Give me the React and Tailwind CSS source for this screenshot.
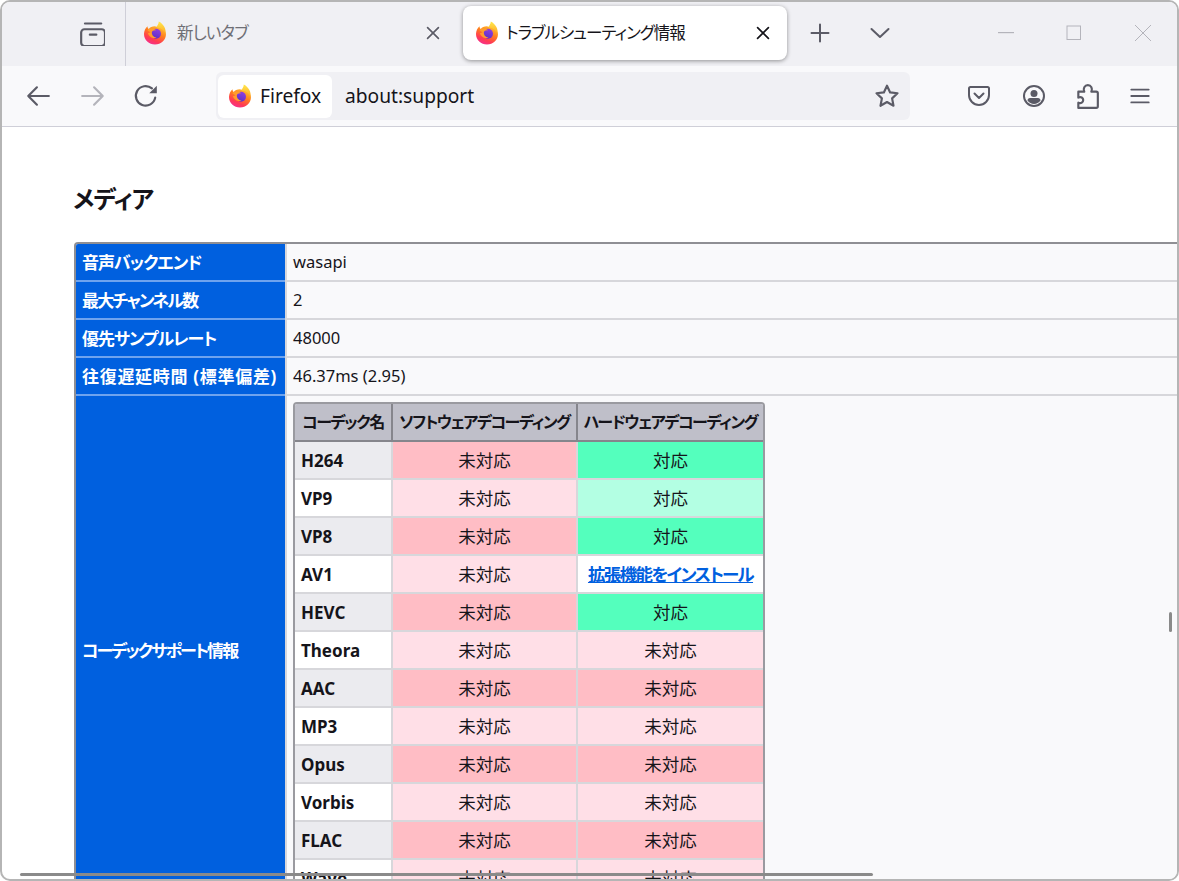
import { useId } from 'react'

const FONT = "font-['Noto_Sans','Noto_Sans_CJK_JP',sans-serif] [font-feature-settings:'palt']"

function FirefoxLogo({ size = 24 }) {
  const id = useId()
  return (
    <svg width={size} height={size} viewBox="0 0 24 24" className="shrink-0" aria-hidden="true">
      <defs>
        <linearGradient id={`${id}b`} x1="0.75" y1="0.05" x2="0.25" y2="0.95">
          <stop offset="0" stopColor="#ffbd2e" />
          <stop offset="0.4" stopColor="#ff7a1f" />
          <stop offset="0.75" stopColor="#ff3a55" />
          <stop offset="1" stopColor="#f5318c" />
        </linearGradient>
        <linearGradient id={`${id}f`} x1="0.5" y1="0" x2="0.5" y2="1">
          <stop offset="0" stopColor="#ffe94d" />
          <stop offset="1" stopColor="#ffa825" />
        </linearGradient>
        <linearGradient id={`${id}c`} x1="0.7" y1="0" x2="0.3" y2="1">
          <stop offset="0" stopColor="#8f3fe0" />
          <stop offset="1" stopColor="#5b2fc4" />
        </linearGradient>
      </defs>
      <path d="M1 13C1 9.600 2.500 7 4.500 5.200 4.600 6.600 5 7.400 5.800 8 7.200 6.200 9.400 5.200 12.500 5.400 17 5.600 23 8.400 23 13 23 19 18 23.500 12 23.500S1 19 1 13Z" fill={`url(#${id}b)`} />
      <path d="M15.800 .5C15.800 3 14 4.400 13.600 6.400 17.500 6.600 21 9 22.400 12.600 23.600 8.800 20.800 3 15.800 .5Z" fill={`url(#${id}f)`} />
      <circle cx="13" cy="12.800" r="5" fill={`url(#${id}c)`} />
      <path d="M4.400 9C6.600 6.900 10.800 7 13.200 9.300 10.800 8.900 9.200 9.800 8.800 11.200 8.600 13.400 10.200 16.200 13.600 16.800 9.600 18 5.400 15.400 5 12 6 12.300 7 11.800 7.600 11 6.400 10.800 5.200 10 4.400 9Z" fill="#ff9d2b" />
    </svg>
  )
}

function Icon({ children, size = 24, className = 'text-[#5b5b66]', sw = 2 }) {
  return (
    <svg width={size} height={size} viewBox="0 0 24 24" fill="none" stroke="currentColor" strokeWidth={sw} strokeLinecap="round" strokeLinejoin="round" className={`shrink-0 ${className}`} aria-hidden="true">
      {children}
    </svg>
  )
}

function TabClose({ className }) {
  return (
    <Icon size={20} className={className} sw={2}>
      <path d="M5.500 5.500l13 13M18.500 5.500l-13 13" />
    </Icon>
  )
}

function TabStrip() {
  return (
    <div className="flex h-[64px] shrink-0 items-stretch bg-[#f0f0f4]">
      <div className="flex w-[124px] shrink-0 items-center justify-end border-r border-[#cfcfd8] pr-[20px] pb-[2px]">
        <Icon size={26}>
          <path d="M5.500 3.200h15" />
          <rect x="2" y="8.500" width="22" height="15.500" rx="3" />
          <path d="M10 13.500h6" />
        </Icon>
      </div>
      <div className="flex flex-1 items-center pb-[2px]">
        <div className="ml-[17px] flex w-[300px] shrink-0 items-center">
          <FirefoxLogo />
          <span className="ml-[10px] flex-1 text-[16.500px] tracking-[-0.8px] text-[#6f6f76]">新しいタブ</span>
          <TabClose className="text-[#5b5b66]" />
        </div>
        <div className="ml-[20px] flex h-[54px] w-[324px] shrink-0 items-center rounded-lg bg-white pl-[12px] pr-[14px] shadow-[0_1px_4px_rgba(0,0,0,0.4)]">
          <FirefoxLogo />
          <span className="ml-[7px] flex-1 text-[16.500px] tracking-[-1px] text-[#15141a]">トラブルシューティング情報</span>
          <TabClose className="text-[#15141a]" />
        </div>
        <Icon size={24} className="ml-[21px] text-[#5b5b66]">
          <path d="M12 3.500v17M3.500 12h17" />
        </Icon>
        <Icon size={24} className="ml-[36px] text-[#5b5b66]">
          <path d="M3.500 8l8.500 8 8.500-8" />
        </Icon>
        <svg width="16" height="2" viewBox="0 0 16 2" className="ml-[106px] shrink-0" aria-hidden="true">
          <rect width="16" height="1.200" fill="#b4b4bb" />
        </svg>
        <svg width="16" height="16" viewBox="0 0 16 16" className="ml-[52px] shrink-0" aria-hidden="true">
          <rect x="1" y="1" width="13.500" height="13.500" fill="none" stroke="#b4b4bb" strokeWidth="1" />
        </svg>
        <svg width="18" height="18" viewBox="0 0 18 18" className="ml-[52px] shrink-0" aria-hidden="true">
          <path d="M1 1l16 16M17 1L1 17" fill="none" stroke="#b4b4bb" strokeWidth="1" />
        </svg>
      </div>
    </div>
  )
}

function Toolbar() {
  return (
    <div className="flex h-[61px] shrink-0 items-center border-b border-[#cfcfd8] bg-[#f9f9fb]">
      <Icon size={26} className="ml-[23px] text-[#5b5b66]">
        <path d="M22 12H3M11 4l-8 8 8 8" />
      </Icon>
      <Icon size={26} className="ml-[29px] text-[#b4b4bb]">
        <path d="M2 12h19M13 4l8 8-8 8" />
      </Icon>
      <Icon size={26} className="ml-[27px] text-[#5b5b66]">
        <path d="M20.500 13.500A9 9 0 1 1 17.500 5" />
        <path d="M15 9.500h7V2.500z" fill="currentColor" stroke="none" />
      </Icon>
      <div className="ml-[57px] flex h-[48px] w-[694px] shrink-0 items-center rounded-md bg-[#f0f0f4] pl-[2px] pr-[10px]">
        <div className="flex h-[43px] w-[114px] shrink-0 items-center rounded-md bg-white pl-[10px]">
          <FirefoxLogo />
          <span className="ml-[8px] text-[19.200px] text-[#15141a]">Firefox</span>
        </div>
        <span className="ml-[13px] flex-1 text-[19.200px] text-[#15141a]">about:support</span>
        <Icon size={26} className="text-[#5b5b66]">
          <path d="M12 2.500l2.900 6.200 6.800.8-5 4.700 1.300 6.800-6-3.400-6 3.400 1.300-6.800-5-4.700 6.800-.8z" />
        </Icon>
      </div>
      <Icon size={24} className="ml-[57px] text-[#5b5b66]">
        <path d="M3.500 3h17A1.500 1.500 0 0 1 22 4.500V11a10 10 0 0 1-20 0V4.500A1.500 1.500 0 0 1 3.500 3Z" />
        <path d="M7.500 9.500L12 14l4.500-4.500" />
      </Icon>
      <svg width="24" height="24" viewBox="0 0 24 24" className="ml-[31px] shrink-0 text-[#5b5b66]" aria-hidden="true">
        <circle cx="12" cy="12" r="10" fill="none" stroke="currentColor" strokeWidth="2" />
        <circle cx="12" cy="9.500" r="3.500" fill="currentColor" />
        <path d="M5.500 16.500c0-1.500 1-2.500 2.500-2.500h8c1.500 0 2.500 1 2.500 2.500-1.500 2-4 3.500-6.500 3.500s-5-1.500-6.500-3.500Z" fill="currentColor" />
      </svg>
      <Icon size={26} className="ml-[28px] text-[#5b5b66]">
        <path d="M9.500 8H4v5.500c2.500-1.300 4.500.3 4.500 2.200S6.500 19.500 4 18.200V23h16.500a1.500 1.500 0 0 0 1.500-1.500V9.500A1.500 1.500 0 0 0 20.500 8H16c1.500-3-.3-6-3.200-6S8 5 9.500 8Z" />
      </Icon>
      <Icon size={22} className="ml-[29px] text-[#5b5b66]">
        <path d="M2.500 5h19M2.500 12h19M2.500 19h19" />
      </Icon>
    </div>
  )
}

const CODECS = [
  ['H264', 'no', 'yes'],
  ['VP9', 'no', 'soft'],
  ['VP8', 'no', 'yes'],
  ['AV1', 'no', 'link'],
  ['HEVC', 'no', 'yes'],
  ['Theora', 'no', 'no'],
  ['AAC', 'no', 'no'],
  ['MP3', 'no', 'no'],
  ['Opus', 'no', 'no'],
  ['Vorbis', 'no', 'no'],
  ['FLAC', 'no', 'no'],
  ['Wave', 'no', 'no'],
]

function SupportCell({ kind, odd, last }) {
  const base = `h-[38px] border-b-2 border-[#d7d7db] p-0 text-center text-[17.500px] text-[#15141a] ${last ? '' : 'border-r-2'}`
  if (kind === 'yes') return <td className={`${base} bg-[#54ffbd]`}>対応</td>
  if (kind === 'soft') return <td className={`${base} bg-[#b3ffe3]`}>対応</td>
  if (kind === 'link') {
    return (
      <td className={`${base} bg-white`}>
        <a href="#install" className="font-bold tracking-[-1.650px] text-[#0060df] underline">拡張機能をインストール</a>
      </td>
    )
  }
  return <td className={`${base} ${odd ? 'bg-[#ffbdc5]' : 'bg-[#ffdfe7]'}`}>未対応</td>
}

function CodecTable() {
  const th = 'h-[38px] border-b-2 border-[#85858c] bg-[#bfbfc9] p-0 text-center text-[16px] font-bold tracking-[-1.400px] whitespace-nowrap text-[#15141a]'
  return (
    <div className="w-[472px] overflow-hidden rounded-[4px] border-2 border-[#9a9aa0]">
      <table className="w-full table-fixed border-separate border-spacing-0">
        <colgroup>
          <col className="w-[98px]" />
          <col className="w-[185px]" />
          <col />
        </colgroup>
        <thead>
          <tr>
            <th className={`${th} border-r-2`}>コーデック名</th>
            <th className={`${th} border-r-2`}>ソフトウェアデコーディング</th>
            <th className={th}>ハードウェアデコーディング</th>
          </tr>
        </thead>
        <tbody>
          {CODECS.map(([name, sw, hw], i) => {
            const odd = i % 2 === 0
            return (
              <tr key={name}>
                <td className={`h-[38px] border-r-2 border-b-2 border-[#d7d7db] p-0 pt-[2px] pl-[6px] text-[17px] font-bold text-[#15141a] ${odd ? 'bg-[#ebebef]' : 'bg-white'}`}>{name}</td>
                <SupportCell kind={sw} odd={odd} />
                <SupportCell kind={hw} odd={odd} last />
              </tr>
            )
          })}
        </tbody>
      </table>
    </div>
  )
}

const ROWS = [
  ['音声バックエンド', 'wasapi', 'tracking-[-1px]'],
  ['最大チャンネル数', '2', 'tracking-[-1.800px]'],
  ['優先サンプルレート', '48000', 'tracking-[-1.100px]'],
  ['往復遅延時間 (標準偏差)', '46.37ms (2.95)', 'tracking-[0.700px]'],
]

function MediaTable() {
  const label = 'h-[38px] bg-[#0060df] p-0 pl-[6px] text-left text-[17px] font-bold whitespace-nowrap text-white'
  const value = 'h-[38px] border-b-2 border-l-2 border-[#d7d7db] bg-[#f9f9fb] p-0 pt-[1px] pl-[6px] text-[16.500px] text-[#15141a]'
  return (
    <div className="w-[1200px] shrink-0 overflow-hidden rounded-tl-[4px] border-2 border-b-0 border-[#8f8f94]">
      <table className="w-full table-fixed border-separate border-spacing-0">
        <colgroup>
          <col className="w-[209px]" />
          <col />
        </colgroup>
        <tbody>
          {ROWS.map(([k, v, track]) => (
            <tr key={k}>
              <th className={`${label} ${track} border-b-2 border-[#6ea3ee] pt-[1px]`}>{k}</th>
              <td className={value}>{v}</td>
            </tr>
          ))}
          <tr>
            <th className={`${label} tracking-[-1.900px]`}>コーデックサポート情報</th>
            <td className="border-l-2 border-[#d7d7db] bg-[#f9f9fb] px-[6px] py-[6px]">
              <CodecTable />
            </td>
          </tr>
        </tbody>
      </table>
    </div>
  )
}

export default function App() {
  return (
    <div className={`relative flex h-[881px] w-[1179px] flex-col overflow-hidden rounded-[10px] border-2 border-[#b5b5b5] bg-white ${FONT}`}>
      <TabStrip />
      <Toolbar />
      <main className="flex-1 overflow-hidden pl-[72px]">
        <h1 className="mt-[56px] mb-[27px] -ml-px text-[24px] leading-[32px] font-bold tracking-[-1px] text-[#15141a]">メディア</h1>
        <MediaTable />
      </main>
      {/* overlay scrollbars */}
      <div className="absolute bottom-[3px] left-[18px] h-[3px] w-[853px] rounded-full bg-[#8a8a8a]" />
      <div className="absolute top-[610px] right-[5px] h-[20px] w-[3px] rounded-full bg-[#8a8a8a]" />
    </div>
  )
}
